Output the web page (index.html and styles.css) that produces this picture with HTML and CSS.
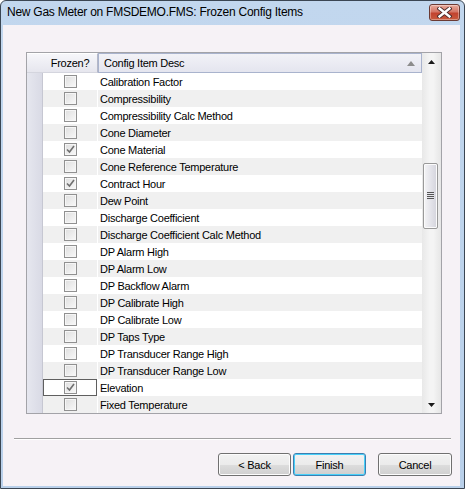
FILE: index.html
```html
<!DOCTYPE html>
<html>
<head>
  <title>Frozen Config Items</title>
  <link rel="stylesheet" href="styles.css">
</head>
<body>
  <div class="window">
    <div class="titlebar">
      <span class="title">New Gas Meter on FMSDEMO.FMS: Frozen Config Items</span>
      <div class="close">
        <svg width="15" height="11" viewBox="0 0 15 11">
          <path d="M2.5 1.5 L12.5 9.5 M12.5 1.5 L2.5 9.5" stroke="#4a2a2a" stroke-width="4.2" stroke-linecap="square"/>
          <path d="M2.5 1.5 L12.5 9.5 M12.5 1.5 L2.5 9.5" stroke="#fff" stroke-width="2.4" stroke-linecap="square"/>
        </svg>
      </div>
    </div>
    <div class="client">
      <div class="grid">
        <div class="grid-main">
          <div class="grid-head">
            <div class="hcell frozen">Frozen?</div>
            <div class="hcell desc">Config Item Desc
              <svg class="sort" width="8" height="5" viewBox="0 0 8 5"><path d="M0 5 L4 0 L8 5 Z" fill="#8c8c8c"/></svg>
            </div>
          </div>
          <div class="rows">
            <div class="row"><div class="rh"></div><div class="cbcell"><span class="cb"></span></div><div class="dcell">Calibration Factor</div></div>
            <div class="row alt"><div class="rh"></div><div class="cbcell"><span class="cb"></span></div><div class="dcell">Compressibility</div></div>
            <div class="row"><div class="rh"></div><div class="cbcell"><span class="cb"></span></div><div class="dcell">Compressibility Calc Method</div></div>
            <div class="row alt"><div class="rh"></div><div class="cbcell"><span class="cb"></span></div><div class="dcell">Cone Diameter</div></div>
            <div class="row"><div class="rh"></div><div class="cbcell"><span class="cb checked"><svg width="9" height="9" viewBox="0 0 9 9"><path d="M1 4.5 L3.5 7 L8 1" fill="none" stroke="#6f6f6f" stroke-width="1.6"/></svg></span></div><div class="dcell">Cone Material</div></div>
            <div class="row alt"><div class="rh"></div><div class="cbcell"><span class="cb"></span></div><div class="dcell">Cone Reference Temperature</div></div>
            <div class="row"><div class="rh"></div><div class="cbcell"><span class="cb checked"><svg width="9" height="9" viewBox="0 0 9 9"><path d="M1 4.5 L3.5 7 L8 1" fill="none" stroke="#6f6f6f" stroke-width="1.6"/></svg></span></div><div class="dcell">Contract Hour</div></div>
            <div class="row alt"><div class="rh"></div><div class="cbcell"><span class="cb"></span></div><div class="dcell">Dew Point</div></div>
            <div class="row"><div class="rh"></div><div class="cbcell"><span class="cb"></span></div><div class="dcell">Discharge Coefficient</div></div>
            <div class="row alt"><div class="rh"></div><div class="cbcell"><span class="cb"></span></div><div class="dcell">Discharge Coefficient Calc Method</div></div>
            <div class="row"><div class="rh"></div><div class="cbcell"><span class="cb"></span></div><div class="dcell">DP Alarm High</div></div>
            <div class="row alt"><div class="rh"></div><div class="cbcell"><span class="cb"></span></div><div class="dcell">DP Alarm Low</div></div>
            <div class="row"><div class="rh"></div><div class="cbcell"><span class="cb"></span></div><div class="dcell">DP Backflow Alarm</div></div>
            <div class="row alt"><div class="rh"></div><div class="cbcell"><span class="cb"></span></div><div class="dcell">DP Calibrate High</div></div>
            <div class="row"><div class="rh"></div><div class="cbcell"><span class="cb"></span></div><div class="dcell">DP Calibrate Low</div></div>
            <div class="row alt"><div class="rh"></div><div class="cbcell"><span class="cb"></span></div><div class="dcell">DP Taps Type</div></div>
            <div class="row"><div class="rh"></div><div class="cbcell"><span class="cb"></span></div><div class="dcell">DP Transducer Range High</div></div>
            <div class="row alt"><div class="rh"></div><div class="cbcell"><span class="cb"></span></div><div class="dcell">DP Transducer Range Low</div></div>
            <div class="row"><div class="rh"></div><div class="cbcell current"><span class="cb checked"><svg width="9" height="9" viewBox="0 0 9 9"><path d="M1 4.5 L3.5 7 L8 1" fill="none" stroke="#6f6f6f" stroke-width="1.6"/></svg></span></div><div class="dcell">Elevation</div></div>
            <div class="row alt"><div class="rh"></div><div class="cbcell"><span class="cb"></span></div><div class="dcell">Fixed Temperature</div></div>
          </div>
        </div>
        <div class="vscroll">
          <div class="sbtn"><svg width="7" height="4" viewBox="0 0 7 4"><path d="M0 4 L3.5 0 L7 4 Z" fill="#1a1a1a"/></svg></div>
          <div class="track">
            <div class="thumb">
              <div class="grip"></div>
            </div>
          </div>
          <div class="sbtn"><svg width="7" height="4" viewBox="0 0 7 4"><path d="M0 0 L3.5 4 L7 0 Z" fill="#1a1a1a"/></svg></div>
        </div>
      </div>
      <div class="sep"></div>
      <div class="buttons">
        <button class="btn">&lt; Back</button>
        <button class="btn default">Finish</button>
        <button class="btn cancel">Cancel</button>
      </div>
    </div>
  </div>
</body>
</html>
```

FILE: styles.css
```css
* {
  box-sizing: border-box;
  margin: 0;
  padding: 0;
}

body {
  width: 465px;
  height: 489px;
  background: #fff;
  font-family: "Liberation Sans", Arial, sans-serif;
  font-size: 11px;
  letter-spacing: -0.25px;
  color: #000;
  overflow: hidden;
}

.window {
  width: 465px;
  height: 489px;
  border: 1px solid #3b4653;
  border-radius: 6px 6px 0 0;
  background: linear-gradient(#c2d7ee, #b9d0ea);
  padding: 0 4px 2px 2px;
  display: flex;
  flex-direction: column;
}

.titlebar {
  height: 24px;
  display: flex;
  align-items: center;
  justify-content: space-between;
  padding: 0 4px 0 5px;
  margin-left: -2px;
  margin-right: -4px;
}

.title {
  font-size: 12px;
  letter-spacing: -0.25px;
  color: #000;
  margin-top: -3px;
  margin-left: 1px;
}

.close {
  width: 31px;
  height: 17px;
  margin-top: -2px;
  border: 1px solid #6b3a33;
  border-radius: 3px;
  background: linear-gradient(#e8aa9c 0%, #d47666 45%, #c2432f 55%, #c85b3e 100%);
  display: flex;
  align-items: center;
  justify-content: center;
  box-shadow: inset 0 0 0 1px rgba(255, 255, 255, 0.35);
}

.client {
  flex: 1;
  background: #f6f2f6;
  display: flex;
  flex-direction: column;
  padding: 27px 8px 0 23px;
}

.grid {
  width: 416px;
  height: 362px;
  border: 1px solid #a3a3a8;
  display: flex;
  background: #fff;
}

.grid-main {
  flex: 1;
  display: flex;
  flex-direction: column;
}

.grid-head {
  height: 20px;
  display: flex;
}

.hcell {
  height: 20px;
  line-height: 19px;
  background: linear-gradient(#f6f6fa, #e6e6ee);
  border-bottom: 1px solid #d4d5de;
  border-top: 1px solid #fff;
}

.frozen {
  width: 71px;
  padding-left: 16px;
  text-align: center;
  border-right: 1px solid #b5b8c8;
}

.desc {
  flex: 1;
  padding-left: 5px;
  position: relative;
  border: 1px solid #a9b3cd;
  background: linear-gradient(#f2f2f7, #e4e5ef);
}

.sort {
  position: absolute;
  right: 6px;
  top: 7px;
}

.row {
  height: 17px;
  display: flex;
  background: #fff;
}

.row.alt {
  background: #f0f0f0;
}

.rh {
  width: 16px;
  background: linear-gradient(to right, #e6e7ef, #d9dae5);
  border-right: 1px solid #c6c7d2;
}

.cbcell {
  width: 54px;
  display: flex;
  align-items: center;
  justify-content: center;
}

.cbcell.current {
  border: 1px solid #5f5f5f;
  background: #fff;
}

.cb {
  width: 13px;
  height: 13px;
  border: 1px solid #909090;
  background: linear-gradient(135deg, #dedede, #f9f9f9);
  box-shadow: inset 0 0 0 1px #f6f6f6;
  display: flex;
  align-items: center;
  justify-content: center;
}

.dcell {
  flex: 1;
  line-height: 17px;
  padding: 1px 0 0 2px;
  border-left: 1px solid #fff;
  white-space: nowrap;
}

.vscroll {
  width: 19px;
  display: flex;
  flex-direction: column;
  background: linear-gradient(to right, #e8e8e8, #f4f4f4 40%, #f4f4f4 60%, #e6e6e6);
}

.sbtn {
  height: 17px;
  display: flex;
  align-items: center;
  justify-content: center;
}

.track {
  flex: 1;
  padding-top: 93px;
  padding-left: 1px;
}

.thumb {
  width: 15px;
  height: 66px;
  border: 1px solid #999;
  border-radius: 2px;
  background: linear-gradient(to right, #f4f4f6, #e4e4ea 50%, #d4d4dc);
  box-shadow: inset 0 0 0 1px #fbfbfb;
  display: flex;
  align-items: center;
  justify-content: center;
}

.grip {
  width: 7px;
  height: 8px;
  background: repeating-linear-gradient(#555 0 1px, #e4e4ea 1px 2px);
}

.sep {
  margin: 24px 0 0 -12px;
  width: 437px;
  height: 2px;
  border-top: 1px solid #a0a0a0;
  border-bottom: 1px solid #fff;
}

.buttons {
  display: flex;
  justify-content: flex-end;
  gap: 2px;
  margin-top: 13px;
}

.btn {
  width: 73px;
  height: 23px;
  font-family: "Liberation Sans", Arial, sans-serif;
  font-size: 11px;
  letter-spacing: -0.25px;
  color: #000;
  border: 1px solid #707070;
  border-radius: 3px;
  background: linear-gradient(#f2f2f2 0%, #ebebeb 50%, #dddddd 51%, #cfcfcf 100%);
  box-shadow: inset 0 0 0 1px #fcfcfc;
}

.btn.default {
  border-color: #3c7fb1;
  box-shadow: inset 0 0 0 1px #48d0f9;
}

.btn.cancel {
  margin-left: 10px;
  width: 74px;
}
```
